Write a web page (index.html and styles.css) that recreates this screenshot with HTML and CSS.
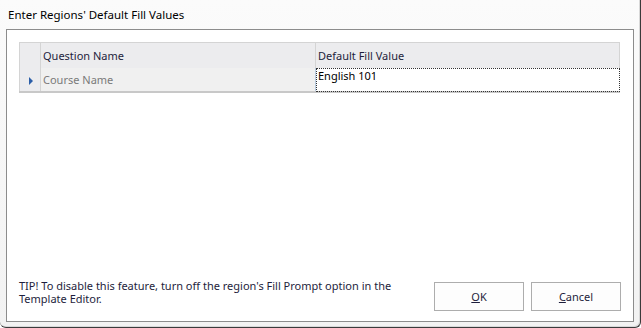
FILE: index.html
```html
<!DOCTYPE html>
<html lang="en">
<head>
<meta charset="utf-8">
<title>Enter Regions' Default Fill Values</title>
<link rel="stylesheet" href="styles.css">
</head>
<body>
<div class="window">
  <div class="titlebar">Enter Regions' Default Fill Values</div>
  <div class="client">
    <table class="grid">
      <tr class="head">
        <td class="rowhead"></td>
        <td class="col1">Question Name</td>
        <td class="col2">Default Fill Value</td>
      </tr>
      <tr class="row">
        <td class="rowhead"><span class="arrow"></span></td>
        <td class="col1 readonly">Course Name</td>
        <td class="col2 current">English 101</td>
      </tr>
    </table>
    <div class="footer">
      <div class="tip">TIP! To disable this feature, turn off the region's Fill Prompt option in the Template Editor.</div>
      <div class="buttons">
        <button class="btn"><u>O</u>K</button>
        <button class="btn"><u>C</u>ancel</button>
      </div>
    </div>
  </div>
</div>
</body>
</html>
```
FILE: styles.css
```css
html, body { margin:0; padding:0; }
body { width:641px; height:328px; overflow:hidden; font-family:"Noto Sans", "Open Sans", sans-serif; font-size:11px; color:#1e1e3c; }

.window { box-sizing:border-box; width:641px; height:328px; background:linear-gradient(#fbfbfb, #f2f2f2); border-right:1px solid #3a3a3a; border-bottom:1px solid #3a3a3a; border-bottom-left-radius:6px; border-bottom-right-radius:6px; box-shadow:inset -1px -1px 0 #d8d8d8; display:flex; flex-direction:column; }

.titlebar { height:29px; line-height:30px; padding-left:8px; font-size:11.5px; color:#000; box-sizing:border-box; }

.client { flex:1; margin:0 6px 5px 6px; background:#fff; border:1px solid #8c8c8c; padding:12px 12px 10px 12px; display:flex; flex-direction:column; }

.grid { border-collapse:collapse; width:601px; table-layout:fixed; border-bottom:2px solid #c8c8c8; }
.grid td { padding:0 0 0 2px; white-space:nowrap; overflow:hidden; }
.head td { height:25px; background:#ececee; border-right:1px solid #d4d4d4; border-top:1px solid #d4d4d4; color:#1e1e3c; }
.head td.rowhead { border-left:1px solid #d4d4d4; }
.row td { height:23px; }
.rowhead { width:18px; background:#ececee; border-right:1px solid #d4d4d4; border-left:1px solid #d4d4d4; text-align:center; }
.col1 { width:272px; }
.readonly { background:#f0f0f0; color:#7a7a7a; border-right:1px solid #b9cce0; }
.current { vertical-align:top; padding-top:1px; outline:1px dotted #333; outline-offset:-1px; color:#000; }
.arrow { display:inline-block; width:0; height:0; border-left:4px solid #2b5ea8; border-top:4px solid transparent; border-bottom:4px solid transparent; vertical-align:middle; }

.footer { margin-top:auto; display:flex; align-items:flex-end; justify-content:space-between; }
.tip { width:380px; line-height:13px; padding-bottom:6px; }
.buttons { display:flex; gap:7px; }
.btn { width:90px; height:29px; background:#fdfdfd; border:1px solid #adadad; font-family:inherit; font-size:11px; color:#1e1e3c; padding:0; }
```
